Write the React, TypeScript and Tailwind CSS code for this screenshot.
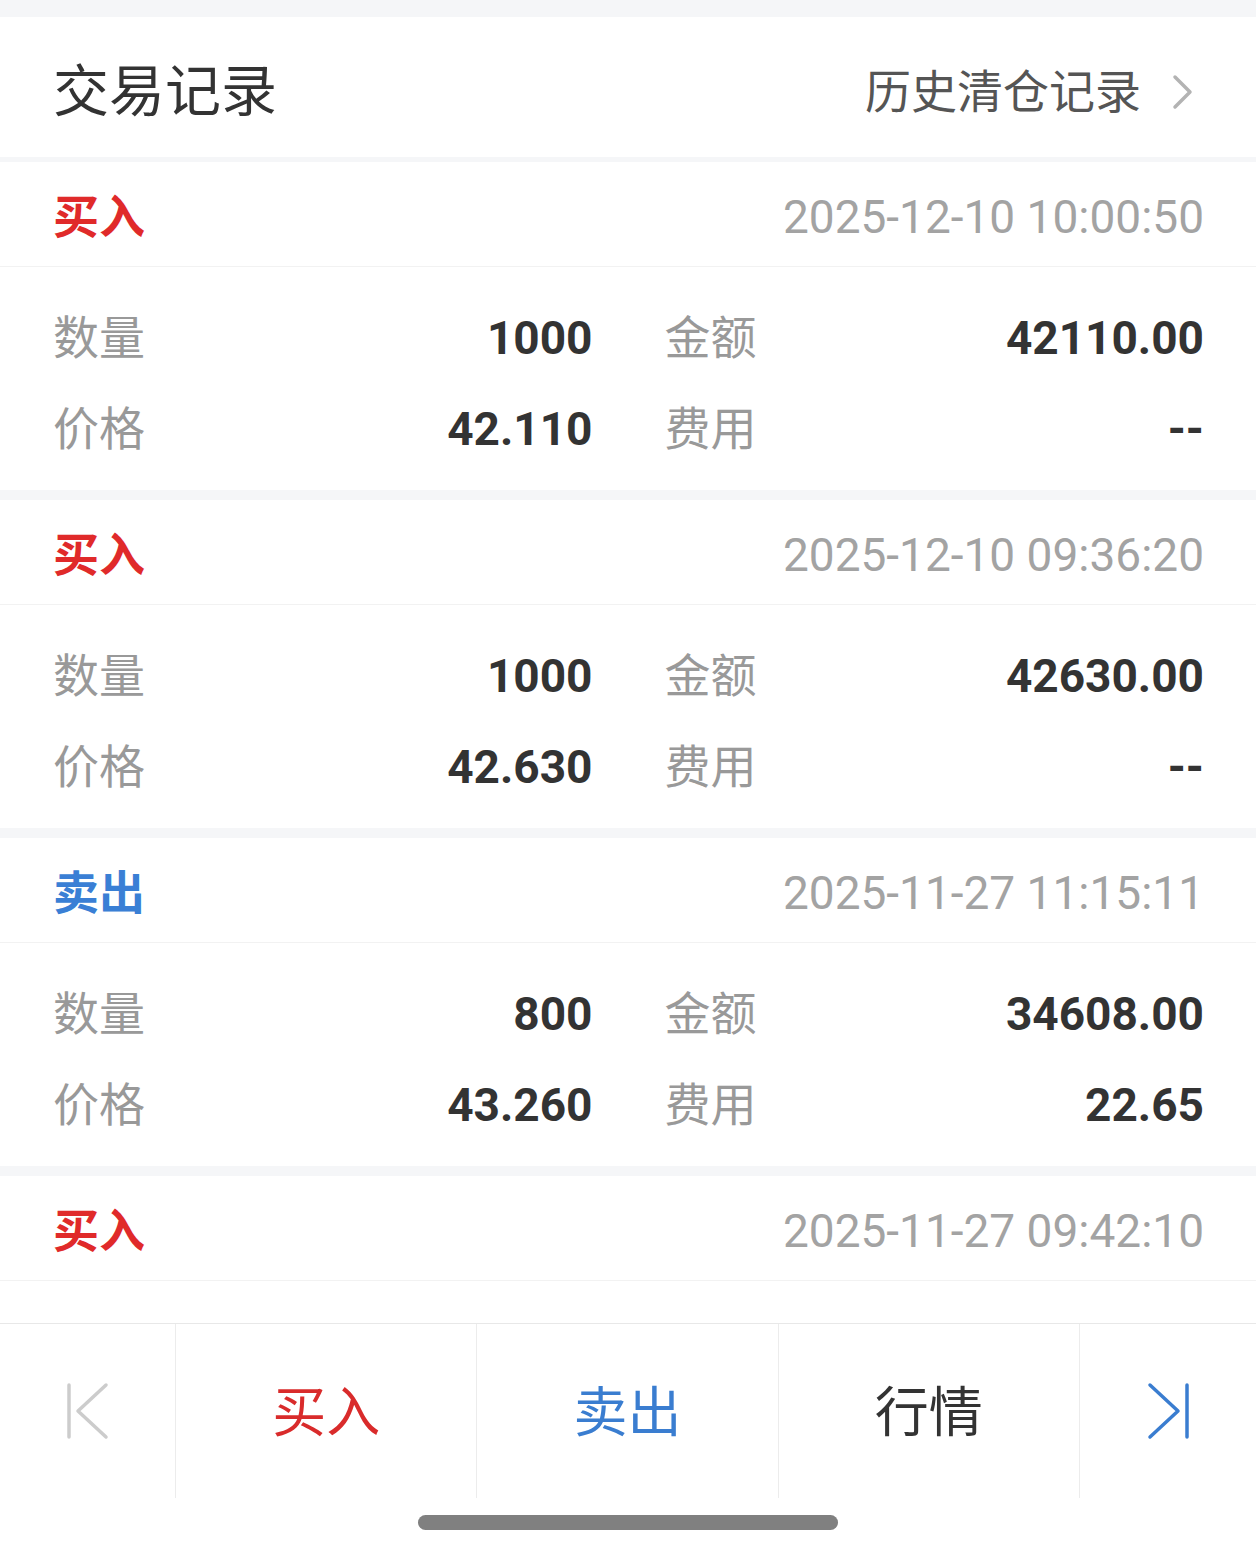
import React from "react";

type Trade = {
    side: "buy" | "sell";
    time: string;
    qty: string;
    amount: string;
    price: string;
    fee: string;
};

const trades: Trade[] = [
    { side: "buy", time: "2025-12-10 10:00:50", qty: "1000", amount: "42110.00", price: "42.110", fee: "--" },
    { side: "buy", time: "2025-12-10 09:36:20", qty: "1000", amount: "42630.00", price: "42.630", fee: "--" },
    { side: "sell", time: "2025-11-27 11:15:11", qty: "800", amount: "34608.00", price: "43.260", fee: "22.65" },
    { side: "buy", time: "2025-11-27 09:42:10", qty: "1000", amount: "43210.00", price: "43.210", fee: "--" },
];

const font = { fontFamily: "Roboto, 'Noto Sans CJK SC', sans-serif" };

function Cell({ label, value }: { label: string; value: string }) {
    return (
        <div className="flex items-center justify-between h-[91px]">
            <span className="text-[46px] text-[#999999]">{label}</span>
            <span className="text-[46px] font-bold text-[#333333]">{value}</span>
        </div>
    );
}

function TradeCard({ t }: { t: Trade }) {
    const isBuy = t.side === "buy";
    return (
        <div className="bg-white shrink-0">
            {/* header */}
            <div className="h-[105px] flex items-center justify-between pl-[53px] pr-[52px] pt-[6px] border-b border-[#f2f2f2]">
                <span className={`text-[46px] font-bold ${isBuy ? "text-[#e02a2a]" : "text-[#3a7fd5]"}`}>
                    {isBuy ? "买入" : "卖出"}
                </span>
                <span className="text-[46px] text-[#a3a3a3]">{t.time}</span>
            </div>

            {/* body */}
            <div className="grid grid-cols-2 gap-x-[72px] pl-[53px] pr-[52px] pt-[25px] pb-[16px]">
                <Cell label="数量" value={t.qty} />
                <Cell label="金额" value={t.amount} />
                <Cell label="价格" value={t.price} />
                <Cell label="费用" value={t.fee} />
            </div>
        </div>
    );
}

export default function App() {
    return (
        <div className="w-[1256px] h-[1554px] bg-white flex flex-col overflow-hidden leading-none" style={font}>
            <div className="h-[17px] bg-[#f5f6f8] shrink-0" />

            {/* Title bar */}
            <div className="h-[140px] shrink-0 flex items-center justify-between pl-[53px] pr-[62px] pt-[10px]">
                <span className="text-[56px] text-[#333333]">交易记录</span>
                <div className="flex items-center gap-[31px]">
                    <span className="text-[46px] text-[#555555]">历史清仓记录</span>
                    <svg width="22" height="36" viewBox="0 0 22 36" fill="none">
                        <path d="M3 3 L18 18 L3 33" stroke="#b3b3b3" strokeWidth="3.5" strokeLinecap="round" strokeLinejoin="round" />
                    </svg>
                </div>
            </div>
            <div className="h-[5px] bg-[#f5f6f8] shrink-0" />

            {/* List */}
            <div className="flex-1 flex flex-col gap-[10px] bg-[#f5f6f8] overflow-hidden">
                {trades.map((t, i) => (
                    <TradeCard key={i} t={t} />
                ))}
            </div>

            {/* Bottom action bar */}
            <div className="h-[175px] shrink-0 border-t border-[#e8e8e8] bg-white flex">
                <div className="w-[176px] flex items-center justify-center border-r border-[#ececec]">
                    <svg width="44" height="58" viewBox="0 0 44 58" fill="none">
                        <path d="M3 3 V55" stroke="#cccccc" strokeWidth="3.5" strokeLinecap="round" />
                        <path d="M40 3 L12 29 L40 55" stroke="#cccccc" strokeWidth="3.5" strokeLinecap="round" strokeLinejoin="round" />
                    </svg>
                </div>
                <div className="flex-1 flex items-center justify-center pt-[6px] border-r border-[#ececec] text-[54px] text-[#d92b2b]">买入</div>
                <div className="flex-1 flex items-center justify-center pt-[6px] border-r border-[#ececec] text-[54px] text-[#3a7dd0]">卖出</div>
                <div className="flex-1 flex items-center justify-center pt-[6px] border-r border-[#ececec] text-[54px] text-[#333333]">行情</div>
                <div className="w-[176px] flex items-center justify-center">
                    <svg width="44" height="58" viewBox="0 0 44 58" fill="none">
                        <path d="M4 3 L32 29 L4 55" stroke="#3a7dd0" strokeWidth="3.5" strokeLinecap="round" strokeLinejoin="round" />
                        <path d="M41 3 V55" stroke="#3a7dd0" strokeWidth="3.5" strokeLinecap="round" />
                    </svg>
                </div>
            </div>

            {/* Home indicator */}
            <div className="h-[56px] shrink-0 bg-white flex justify-center pt-[17px]">
                <div className="w-[420px] h-[15px] rounded-full bg-[#808080]" />
            </div>
        </div>
    );
}
